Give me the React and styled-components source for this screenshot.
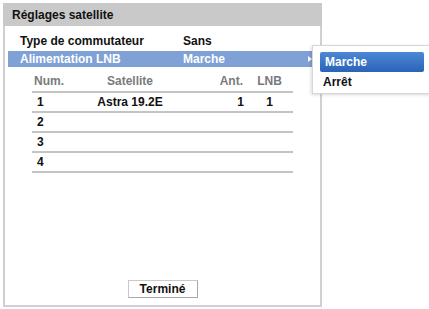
import React from "react";
import styled, { createGlobalStyle } from "styled-components";

const GlobalStyle = createGlobalStyle`
  html, body {
    margin: 0;
    padding: 0;
    background: #ffffff;
  }
  body {
    font-family: "Liberation Sans", Arial, sans-serif;
  }
`;

const satellites = [
  { num: "1", name: "Astra 19.2E", ant: "1", lnb: "1" },
  { num: "2", name: "", ant: "", lnb: "" },
  { num: "3", name: "", ant: "", lnb: "" },
  { num: "4", name: "", ant: "", lnb: "" },
];

export default function App() {
  return (
    <Screen>
      <GlobalStyle />
      <Panel>
        <Title>Réglages satellite</Title>
        <Body>
          <SettingRow>
            <Label>Type de commutateur</Label>
            <Value>Sans</Value>
          </SettingRow>
          <SettingRow selected>
            <Label>Alimentation LNB</Label>
            <Value>Marche</Value>
            <Arrow />
          </SettingRow>
          <Table>
            <HeadRow>
              <NumCell head>Num.</NumCell>
              <SatCell>Satellite</SatCell>
              <AntCell head>Ant.</AntCell>
              <LnbCell>LNB</LnbCell>
            </HeadRow>
            {satellites.map((s) => (
              <DataRow key={s.num}>
                <NumCell>{s.num}</NumCell>
                <SatCell>{s.name}</SatCell>
                <AntCell>{s.ant}</AntCell>
                <LnbCell>{s.lnb}</LnbCell>
              </DataRow>
            ))}
          </Table>
          <Footer>
            <DoneButton>Terminé</DoneButton>
          </Footer>
        </Body>
      </Panel>
      <Menu>
        <MenuItem active>Marche</MenuItem>
        <MenuItem>Arrêt</MenuItem>
      </Menu>
    </Screen>
  );
}

const Screen = styled.div`
  position: relative;
  width: 429px;
  height: 309px;
  overflow: hidden;
  padding: 3px 0 0 3px;
  box-sizing: border-box;
`;

const Panel = styled.div`
  width: 319px;
  height: 304px;
  box-sizing: border-box;
  border: 2px solid #d0d0d0;
  border-top: none;
  display: flex;
  flex-direction: column;
`;

const Title = styled.div`
  height: 23px;
  margin: 0 -2px;
  background: #c9c9c9;
  display: flex;
  align-items: center;
  padding-left: 9px;
  font-size: 12px;
  font-weight: bold;
  color: #111;
`;

const Body = styled.div`
  flex: 1;
  display: flex;
  flex-direction: column;
  padding: 7px 0 0 3px;
`;

const SettingRow = styled.div`
  position: relative;
  height: 16px;
  margin-bottom: 2px;
  display: flex;
  align-items: center;
  padding-left: 12px;
  background: ${(p) => (p.selected ? "#7fa1d6" : "transparent")};
  color: ${(p) => (p.selected ? "#ffffff" : "#111111")};
  font-size: 12px;
  font-weight: bold;
`;

const Label = styled.span`
  width: 163px;
`;

const Value = styled.span`
  flex: 1;
`;

const Arrow = styled.span`
  width: 0;
  height: 0;
  margin-right: 8px;
  border-top: 3px solid transparent;
  border-bottom: 3px solid transparent;
  border-left: 4px solid #ffffff;
`;

const Table = styled.div`
  margin: 2px 0 0 24px;
  width: 261px;
  display: flex;
  flex-direction: column;
  font-size: 12px;
  font-weight: bold;
`;

const HeadRow = styled.div`
  display: flex;
  align-items: center;
  height: 20px;
  border-bottom: 2px solid #c4c4c4;
  color: #7a7a7a;
`;

const DataRow = styled.div`
  display: flex;
  align-items: center;
  height: 18px;
  border-bottom: 2px solid #c4c4c4;
  color: #111111;
`;

const NumCell = styled.div`
  width: 58px;
  padding-left: ${(p) => (p.head ? "2px" : "5px")};
  box-sizing: border-box;
`;

const SatCell = styled.div`
  width: 80px;
  text-align: center;
`;

const AntCell = styled.div`
  width: 74px;
  text-align: right;
  padding-right: ${(p) => (p.head ? "1px" : "0")};
  box-sizing: border-box;
`;

const LnbCell = styled.div`
  flex: 1;
  padding-left: 2px;
  text-align: center;
`;

const Footer = styled.div`
  margin-top: auto;
  display: flex;
  justify-content: center;
  padding: 0 3px 7px 0;
`;

const DoneButton = styled.div`
  width: 70px;
  height: 18px;
  box-sizing: border-box;
  border: 1px solid #c8c8c8;
  border-right-color: #a8a8a8;
  border-bottom-color: #a8a8a8;
  display: flex;
  align-items: center;
  justify-content: center;
  font-size: 12px;
  font-weight: bold;
  color: #111;
`;

const Menu = styled.div`
  position: absolute;
  left: 312px;
  top: 45px;
  width: 124px;
  height: 49px;
  box-sizing: border-box;
  background: #ffffff;
  border: 1px solid #d6d6d6;
  box-shadow: -1px 1px 3px rgba(0, 0, 0, 0.15);
  padding: 6px 0 0 7px;
  display: flex;
  flex-direction: column;
`;

const MenuItem = styled.div`
  width: 104px;
  height: 20px;
  box-sizing: border-box;
  padding-left: ${(p) => (p.active ? "5px" : "3px")};
  display: flex;
  align-items: center;
  border-radius: 2px;
  font-size: 12px;
  font-weight: bold;
  color: ${(p) => (p.active ? "#ffffff" : "#111111")};
  background: ${(p) =>
    p.active ? "linear-gradient(#4c88d6, #2b63b7)" : "transparent"};
`;
